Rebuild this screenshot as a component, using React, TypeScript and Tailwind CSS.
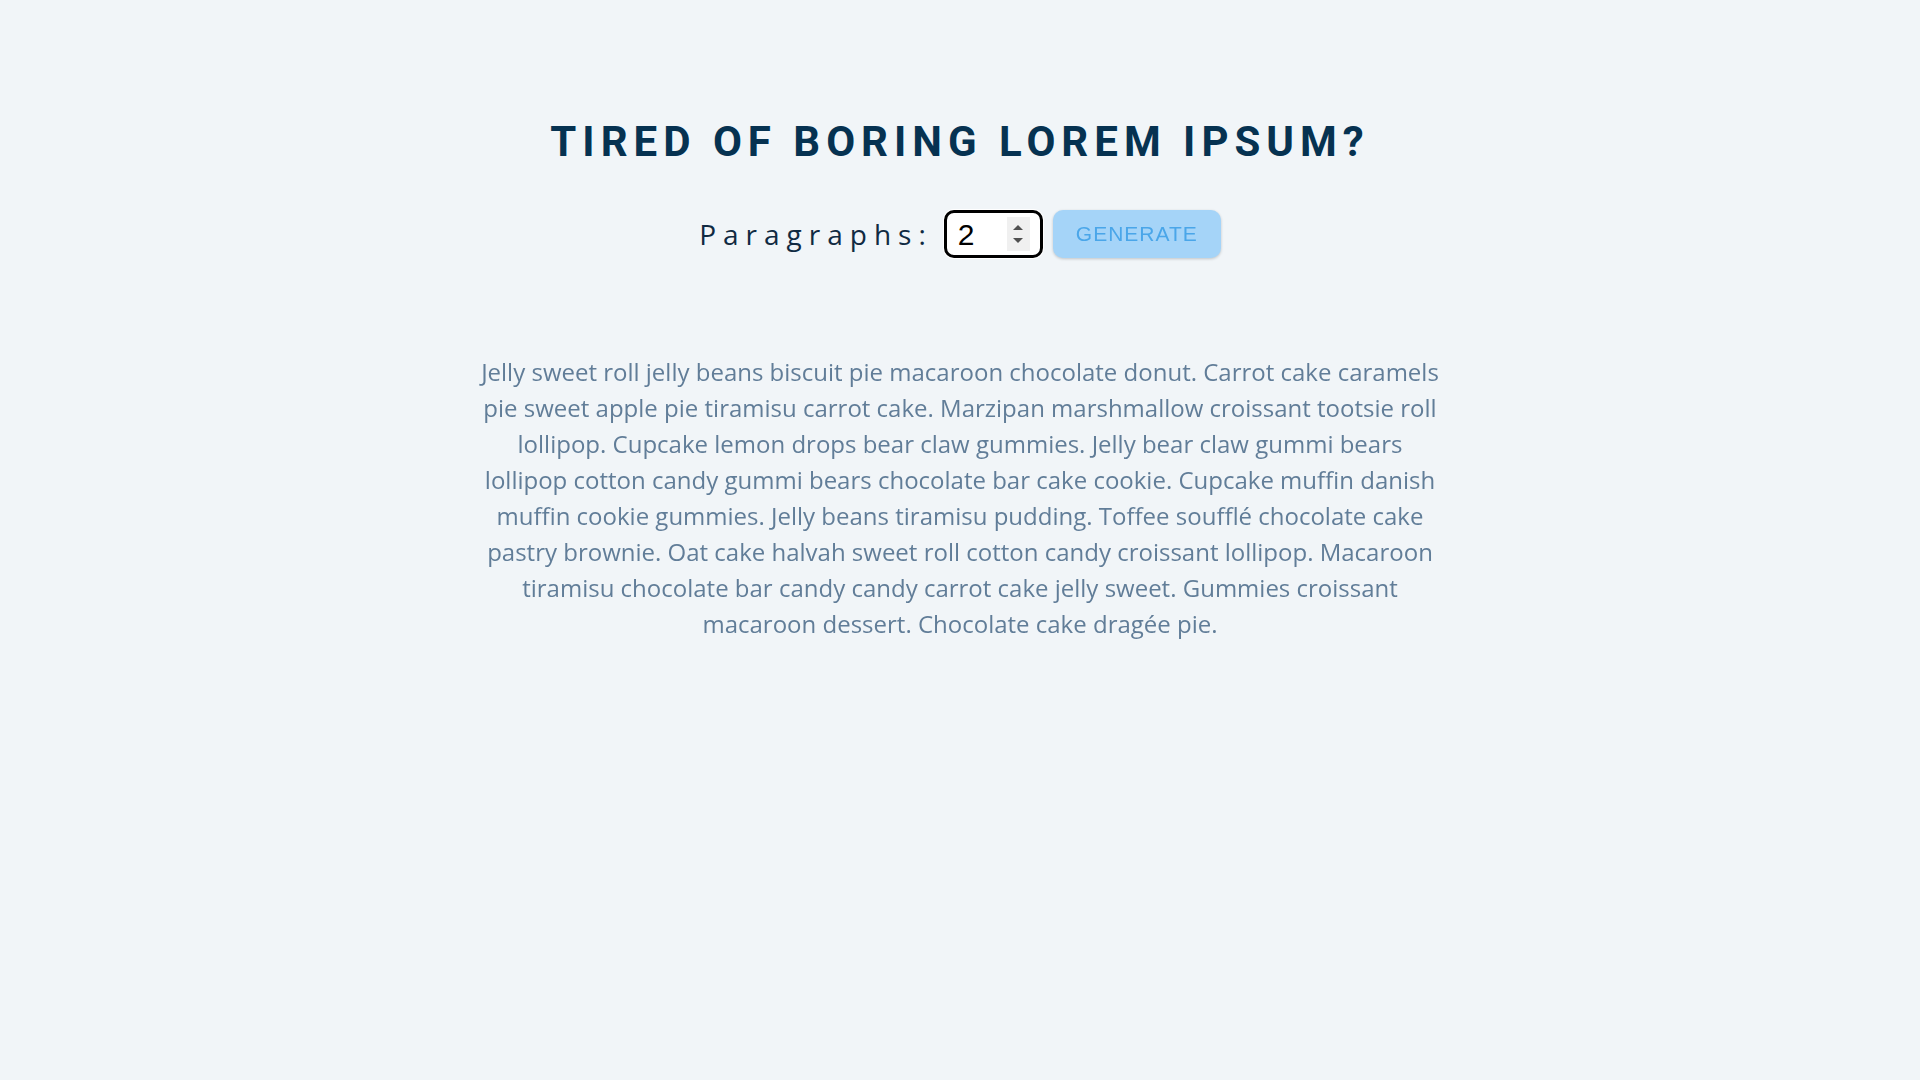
import { useState } from 'react';

const text =
  'Jelly sweet roll jelly beans biscuit pie macaroon chocolate donut. Carrot cake caramels pie sweet apple pie tiramisu carrot cake. Marzipan marshmallow croissant tootsie roll lollipop. Cupcake lemon drops bear claw gummies. Jelly bear claw gummi bears lollipop cotton candy gummi bears chocolate bar cake cookie. Cupcake muffin danish muffin cookie gummies. Jelly beans tiramisu pudding. Toffee soufflé chocolate cake pastry brownie. Oat cake halvah sweet roll cotton candy croissant lollipop. Macaroon tiramisu chocolate bar candy candy carrot cake jelly sweet. Gummies croissant macaroon dessert. Chocolate cake dragée pie.';

export default function App() {
  const [count, setCount] = useState(2);

  return (
    <div className="min-h-screen bg-[#f1f5f8] font-['Open_Sans',sans-serif]">
      <section className="mx-auto w-[960px] pt-[121px] text-center">
        <h3 className="font-['Roboto',sans-serif] text-[42px] leading-none font-bold tracking-[6px] text-[#063251] uppercase">
          Tired of boring lorem ipsum?
        </h3>
        <form
          className="mt-[47px] flex items-center justify-center"
          onSubmit={(e) => e.preventDefault()}
        >
          <label htmlFor="amount" className="text-[28px] tracking-[0.25em] text-[#102a42]">
            Paragraphs:
          </label>
          <div className="ml-[11px] flex h-[48px] w-[99px] items-center rounded-[10px] border-[3px] border-black bg-white pr-[10px] pl-[11px] shadow-[0_0_0_1px_#fff]">
            <input
              id="amount"
              type="number"
              autoFocus
              value={count}
              onChange={(e) => setCount(Number(e.target.value))}
              className="w-full min-w-0 appearance-none bg-transparent font-['Liberation_Sans',sans-serif] text-[30px] text-black caret-black outline-none [&::-webkit-inner-spin-button]:appearance-none [&::-webkit-outer-spin-button]:appearance-none"
            />
            <div className="flex h-[34px] w-[23px] shrink-0 flex-col items-center justify-center gap-[8px] bg-[#f0f0f0]">
              <span className="h-0 w-0 border-x-[5px] border-b-[5px] border-x-transparent border-b-[#505050]" />
              <span className="h-0 w-0 border-x-[5px] border-t-[5px] border-x-transparent border-t-[#505050]" />
            </div>
          </div>
          <button
            type="submit"
            className="ml-[10px] h-[48px] w-[168px] rounded-[10px] bg-[#a5d4f8] font-['Liberation_Sans',sans-serif] text-[21px] tracking-[1px] text-[#4aa6e9] uppercase shadow-[0_1px_3px_rgba(0,0,0,0.2)]"
          >
            Generate
          </button>
        </form>
        <article className="mt-[96px]">
          <p className="text-[24px] leading-[1.5] text-[#617d98]">{text}</p>
        </article>
      </section>
    </div>
  );
}
